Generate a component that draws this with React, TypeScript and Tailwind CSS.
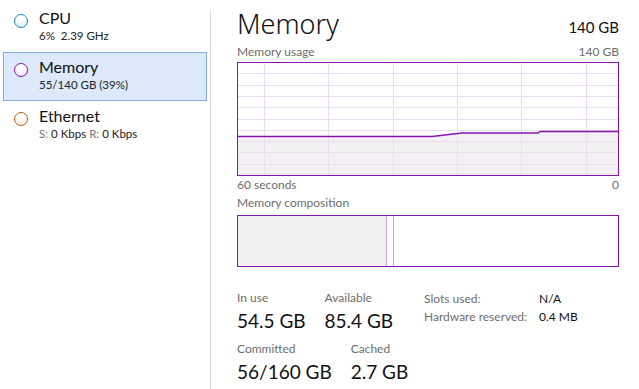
const PURPLE = '#8b12ae'

type Item = {
  name: string
  sub: React.ReactNode
  ring: string
  fill: string
  selected?: boolean
}

const items: Item[] = [
  { name: 'CPU', sub: '6%  2.39 GHz', ring: '#1b85c7', fill: '#cde6f6' },
  { name: 'Memory', sub: '55/140 GB (39%)', ring: PURPLE, fill: '#f0dcf5', selected: true },
  {
    name: 'Ethernet',
    sub: (
      <>
        <span className="text-[#777]">S:</span> 0 Kbps <span className="text-[#777]">R:</span> 0 Kbps
      </>
    ),
    ring: '#c35a0d',
    fill: '#fbe3cf',
  },
]

function SidebarItem({ item }: { item: Item }) {
  return (
    <div
      className={`mx-[3px] h-[49px] flex px-[10px] pt-[4px] border ${
        item.selected ? 'bg-[#dbe9fb] border-[#84ace0]' : 'border-transparent'
      }`}
    >
      <div
        className="w-[14px] h-[14px] rounded-full border mt-[6px] shrink-0"
        style={{ borderColor: item.ring, background: `radial-gradient(circle at 50% 20%, #fff 30%, ${item.fill})` }}
      />
      <div className="ml-[11px]">
        <div className="text-[16px] leading-[20px] text-[#111]">{item.name}</div>
        <div className="text-[11.5px] leading-[15px] text-[#222] whitespace-pre">{item.sub}</div>
      </div>
    </div>
  )
}

function UsageGraph() {
  const w = 382
  const h = 114
  const vlines = [27, 91, 156, 220, 284, 349]
  const hlines = Array.from({ length: 9 }, (_, i) => Math.round(11.3 * (i + 1)) + 0.5)
  const line = `0,74.5 195,74.5 225,71 301,71 303,69.5 ${w},69.5`
  return (
    <svg width={w} height={h} className="block">
      <polygon points={`${line} ${w},${h} 0,${h}`} fill="#f3f0f4" />
      {vlines.map(x => (
        <line key={x} x1={x + 0.5} x2={x + 0.5} y1={0} y2={h} stroke="#ecdcf1" />
      ))}
      {hlines.map(y => (
        <line key={y} x1={0} x2={w} y1={y} y2={y} stroke="#ecdcf1" />
      ))}
      <polyline points={line} fill="none" stroke={PURPLE} strokeWidth={1.4} />
      <rect x={0.5} y={0.5} width={w - 1} height={h - 1} fill="none" stroke={PURPLE} />
    </svg>
  )
}

function Stat({ label, value }: { label: string; value: string }) {
  return (
    <div className="whitespace-nowrap">
      <div className="text-[12px] leading-[16px] text-[#6d6d6d]">{label}</div>
      <div className="text-[19px] leading-[24px] text-[#111] mt-[3px]">{value}</div>
    </div>
  )
}

export default function App() {
  return (
    <div
      className="w-[639px] h-[389px] bg-white flex overflow-hidden"
      style={{ fontFamily: 'Lato, "Noto Sans", sans-serif' }}
    >
      <aside className="w-[210px] pt-[3px] shrink-0">
        {items.map(item => (
          <SidebarItem key={item.name} item={item} />
        ))}
      </aside>
      <div className="w-px bg-[#dadada] mt-[10px]" />
      <main className="flex-1 pl-[26px] pr-[20px]">
        <div className="flex justify-between items-end h-[42px]">
          <h1
            className="text-[27px] font-light leading-[36px] text-[#111]"
            style={{ fontFamily: '"Noto Sans", sans-serif' }}
          >
            Memory
          </h1>
          <div className="text-[15px] leading-[20px] text-[#111] mb-[5px]">140 GB</div>
        </div>
        <div className="flex justify-between text-[12px] leading-[16px] text-[#6d6d6d] mt-[2px] mb-[2px]">
          <span>Memory usage</span>
          <span>140 GB</span>
        </div>
        <UsageGraph />
        <div className="flex justify-between text-[12px] leading-[16px] text-[#6d6d6d] mt-[1px]">
          <span>60 seconds</span>
          <span>0</span>
        </div>
        <div className="text-[12px] leading-[16px] text-[#6d6d6d] mt-[2px]">Memory composition</div>
        <div className="mt-[4px] h-[52px] border border-[#8b12ae] flex">
          <div className="w-[149px] bg-[#f3f0f4] border-r border-[#caa2da]" />
          <div className="w-[6px]" />
          <div className="w-px bg-[#caa2da]" />
        </div>
        <div className="flex mt-[23px]">
          <div className="w-[187px] shrink-0">
            <div className="flex gap-[19px]">
              <Stat label="In use" value="54.5 GB" />
              <Stat label="Available" value="85.4 GB" />
            </div>
            <div className="flex gap-[19px] mt-[8px]">
              <Stat label="Committed" value="56/160 GB" />
              <Stat label="Cached" value="2.7 GB" />
            </div>
          </div>
          <div className="grid grid-cols-[115px_auto] content-start text-[12px] leading-[18px] whitespace-nowrap">
            <span className="text-[#6d6d6d]">Slots used:</span>
            <span className="text-[#111]">N/A</span>
            <span className="text-[#6d6d6d]">Hardware reserved:</span>
            <span className="text-[#111]">0.4 MB</span>
          </div>
        </div>
      </main>
    </div>
  )
}
